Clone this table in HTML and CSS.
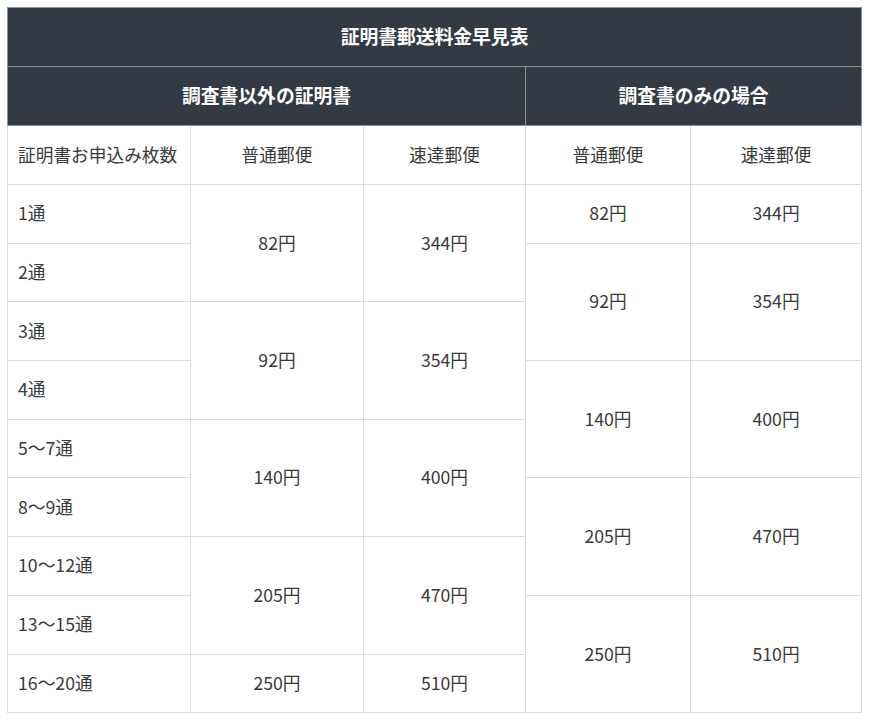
FILE: index.html
```html
<!DOCTYPE html>
<html lang="ja">
<head>
<meta charset="utf-8">
<link rel="stylesheet" href="styles.css">
</head>
<body>
<table class="fee">
  <colgroup>
    <col class="c1"><col class="c2"><col class="c3"><col class="c4"><col class="c5">
  </colgroup>
  <thead>
    <tr class="hrow"><th colspan="5">証明書郵送料金早見表</th></tr>
    <tr class="hrow"><th colspan="3">調査書以外の証明書</th><th colspan="2">調査書のみの場合</th></tr>
  </thead>
  <tbody>
    <tr class="head2">
      <td class="left">証明書お申込み枚数</td><td>普通郵便</td><td>速達郵便</td><td>普通郵便</td><td>速達郵便</td>
    </tr>
    <tr><td class="left">1通</td><td rowspan="2">82円</td><td rowspan="2">344円</td><td>82円</td><td>344円</td></tr>
    <tr><td class="left">2通</td><td rowspan="2">92円</td><td rowspan="2">354円</td></tr>
    <tr><td class="left">3通</td><td rowspan="2">92円</td><td rowspan="2">354円</td></tr>
    <tr><td class="left">4通</td><td rowspan="2">140円</td><td rowspan="2">400円</td></tr>
    <tr><td class="left">5〜7通</td><td rowspan="2">140円</td><td rowspan="2">400円</td></tr>
    <tr><td class="left">8〜9通</td><td rowspan="2">205円</td><td rowspan="2">470円</td></tr>
    <tr><td class="left">10〜12通</td><td rowspan="2">205円</td><td rowspan="2">470円</td></tr>
    <tr><td class="left">13〜15通</td><td rowspan="2">250円</td><td rowspan="2">510円</td></tr>
    <tr><td class="left">16〜20通</td><td>250円</td><td>510円</td></tr>
  </tbody>
</table>
</body>
</html>
```
FILE: styles.css
```css
html, body {
  margin: 0;
  padding: 0;
  background: #fff;
}
body {
  padding: 7px 0 0 7px;
  font-family: "Noto Sans CJK JP", "Noto Sans", sans-serif;
  color: #3a3a3a;
}
.fee {
  border-collapse: collapse;
  table-layout: fixed;
  width: 854px;
  font-size: 17.7px;
}
.c1 { width: 183px; }
.c2 { width: 173px; }
.c3 { width: 162px; }
.c4 { width: 165px; }
.c5 { width: 171px; }
.fee th {
  background: #333a44;
  color: #fff;
  font-weight: bold;
  font-size: 18.8px;
  border: 1px solid #8d939a;
  height: 54px;
  padding: 0 0 4px;
  text-align: center;
  vertical-align: middle;
}
.fee td {
  border: 1px solid #dcdcdc;
  height: 54.7px;
  padding: 0 0 3px;
  text-align: center;
  vertical-align: middle;
  font-weight: normal;
}
.fee td.left {
  text-align: left;
  padding-left: 10px;
}
.fee .head2 td {
  height: 55px;
}
```
